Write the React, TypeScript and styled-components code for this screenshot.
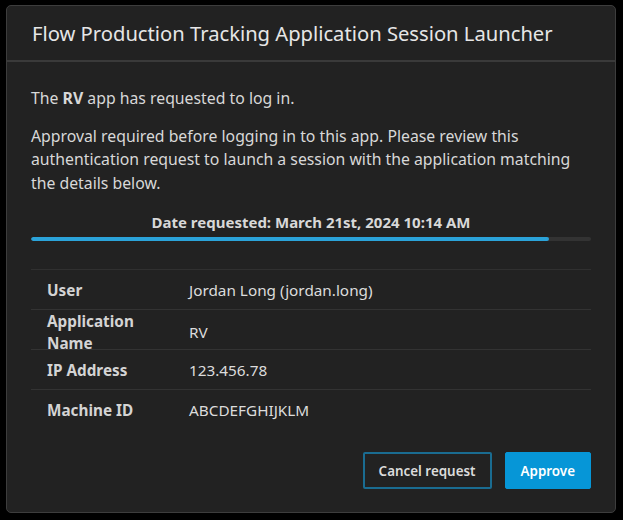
import styled, { createGlobalStyle } from 'styled-components'

const GlobalStyle = createGlobalStyle`
  html, body {
    margin: 0;
    padding: 0;
    background: #000;
  }
  body {
    font-family: "Noto Sans", "Open Sans", sans-serif;
    color: #dcdcdc;
  }
`

const Page = styled.div`
  width: 623px;
  height: 520px;
  padding: 5px 0 0 6px;
  box-sizing: border-box;
`

const Dialog = styled.div`
  width: 610px;
  height: 508px;
  box-sizing: border-box;
  background: #222222;
  border: 1px solid #3d3d3d;
  border-radius: 5px;
  display: flex;
  flex-direction: column;
`

const Header = styled.div`
  height: 54px;
  display: flex;
  align-items: center;
  padding: 0 25px;
  border-bottom: 2px solid #3a3a3a;
`

const Title = styled.h1`
  margin: 0;
  font-size: 20.2px;
  font-weight: 400;
  color: #e6e6e6;
`

const Body = styled.div`
  padding: 25px 24px 0 24px;
  display: flex;
  flex-direction: column;
  flex: 1;
`

const Text = styled.p`
  margin: 0 0 14px 0;
  font-size: 15.8px;
  line-height: 23.5px;
  color: #d8d8d8;
`

const DateLine = styled.div`
  margin-top: 3px;
  text-align: center;
  font-size: 15px;
  line-height: 20px;
  font-weight: 700;
  color: #d8d8d8;
`

const Track = styled.div`
  margin-top: 5px;
  height: 4px;
  border-radius: 2px;
  background: #333;
  overflow: hidden;
`

const Fill = styled.div`
  height: 100%;
  background: #2ba3d9;
  border-radius: 2px;
`

const Table = styled.div`
  margin-top: 28px;
  border-top: 1px solid #303030;
`

const Row = styled.div<{ $last?: boolean }>`
  display: grid;
  grid-template-columns: 141px 1fr;
  align-items: center;
  height: 39px;
  padding: 0 16px;
  border-bottom: ${p => (p.$last ? '1px solid transparent' : '1px solid #333')};
`

const Label = styled.div`
  font-size: 15.3px;
  font-weight: 700;
  line-height: 22px;
  color: #d4d4d4;
`

const Value = styled.div`
  font-size: 15.3px;
  color: #dcdcdc;
  padding-left: 1px;
`

const Footer = styled.div`
  display: flex;
  justify-content: flex-end;
  gap: 13px;
  padding: 0 24px 23px 0;
  margin-top: auto;
`

const Button = styled.button<{ $primary?: boolean }>`
  height: 37px;
  padding: ${p => (p.$primary ? '0 15px' : '0 14px')};
  font-family: inherit;
  font-size: 13.4px;
  font-weight: 600;
  border-radius: 2px;
  cursor: pointer;
  color: ${p => (p.$primary ? '#ffffff' : '#dcdcdc')};
  background: ${p => (p.$primary ? '#0696d7' : '#222')};
  border: ${p => (p.$primary ? '1px solid #0696d7' : '2px solid #1a6c91')};
`

const details = [
  { label: 'User', value: 'Jordan Long (jordan.long)' },
  { label: 'Application Name', value: 'RV' },
  { label: 'IP Address', value: '123.456.78' },
  { label: 'Machine ID', value: 'ABCDEFGHIJKLM' },
]

export default function App() {
  const progress = 92.5
  return (
    <>
      <GlobalStyle />
      <Page>
        <Dialog>
          <Header>
            <Title>Flow Production Tracking Application Session Launcher</Title>
          </Header>
          <Body>
            <Text>
              The <b>RV</b> app has requested to log in.
            </Text>
            <Text>
              Approval required before logging in to this app. Please review this authentication
              request to launch a session with the application matching the details below.
            </Text>
            <DateLine>Date requested: March 21st, 2024 10:14 AM</DateLine>
            <Track>
              <Fill style={{ width: `${progress}%` }} />
            </Track>
            <Table>
              {details.map((d, i) => (
                <Row key={d.label} $last={i === details.length - 1}>
                  <Label>{d.label === 'Application Name' ? <>Application<br />Name</> : d.label}</Label>
                  <Value>{d.value}</Value>
                </Row>
              ))}
            </Table>
          </Body>
          <Footer>
            <Button>Cancel request</Button>
            <Button $primary>Approve</Button>
          </Footer>
        </Dialog>
      </Page>
    </>
  )
}
